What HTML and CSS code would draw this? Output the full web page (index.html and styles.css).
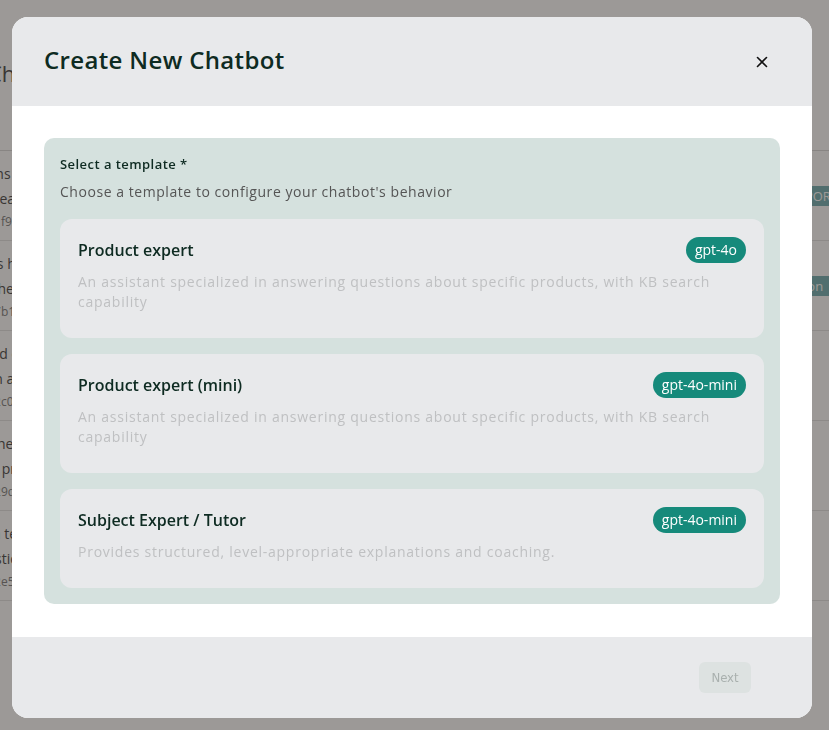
FILE: index.html
```html
<!DOCTYPE html>
<html>
	<head>
		<meta charset="UTF-8">
		<title>Create New Chatbot</title>
		<link rel="stylesheet" href="styles.css">
	</head>
	<body>
		<div class="page">
			<h1 class="pageTitle">Chatbots</h1>
			<table class="bots" cellpadding="0" cellspacing="0">
				<tr>
					<th class="colName">Name</th>
					<th>Template</th>
					<th class="colTag">Created At</th>
				</tr>
				<tr>
					<td><p>Maths tutor</p><p>for year seven</p><small>bot_1f9c2a</small></td>
					<td>Subject Expert / Tutor</td>
					<td><span class="tag">DATA_EXPORT</span></td>
				</tr>
				<tr>
					<td><p>Sales help</p><p>for the green line</p><small>bot_7b11de</small></td>
					<td>Product expert</td>
					<td><span class="tag">information</span></td>
				</tr>
				<tr>
					<td><p>Cloud docs</p><p>main assistant</p><small>bot_2c0e41</small></td>
					<td>Product expert (mini)</td>
					<td><span class="tag">SYSTEM</span></td>
				</tr>
				<tr>
					<td><p>Ex - helper</p><p>best practices</p><small>bot_29d0a7</small></td>
					<td>Product expert</td>
					<td><span class="tag">practise</span></td>
				</tr>
				<tr>
					<td><p>Data team</p><p>questions</p><small>bot_2e55f0</small></td>
					<td>Subject Expert / Tutor</td>
					<td><span class="tag">printing</span></td>
				</tr>
			</table>
		</div>

		<div class="overlay">
			<div class="modal">
				<div class="modalHead">
					<h2>Create New Chatbot</h2>
					<a href="#" class="close">
						<svg width="12" height="12" viewBox="0 0 12 12">
							<path d="M1.5 1.5 L10.5 10.5 M10.5 1.5 L1.5 10.5" stroke="#111" stroke-width="1.6" stroke-linecap="round"/>
						</svg>
					</a>
				</div>
				<div class="modalBody">
					<div class="picker">
						<p class="label">Select a template *</p>
						<p class="hint">Choose a template to configure your chatbot's behavior</p>
						<div class="cards">
							<div class="card">
								<div class="cardTop">
									<p class="cardName">Product expert</p>
									<span class="model">gpt-4o</span>
								</div>
								<p class="cardText">An assistant specialized in answering questions about specific products, with KB search capability</p>
							</div>
							<div class="card">
								<div class="cardTop">
									<p class="cardName">Product expert (mini)</p>
									<span class="model">gpt-4o-mini</span>
								</div>
								<p class="cardText">An assistant specialized in answering questions about specific products, with KB search capability</p>
							</div>
							<div class="card">
								<div class="cardTop">
									<p class="cardName">Subject Expert / Tutor</p>
									<span class="model">gpt-4o-mini</span>
								</div>
								<p class="cardText">Provides structured, level-appropriate explanations and coaching.</p>
							</div>
						</div>
					</div>
				</div>
				<div class="modalFoot">
					<button class="next" disabled>Next</button>
				</div>
			</div>
		</div>
	</body>
</html>
```

FILE: styles.css
```css
*{
	margin: 0;
	padding: 0;
	box-sizing: border-box;
}
body{
	width: 829px;
	height: 730px;
	overflow: hidden;
	background: #fff;
	font-family: "Open Sans", "Noto Sans", sans-serif;
}

/* page behind the dialog */
.page{
	width: 900px;
	margin: 0 0 0 -42px;
	padding: 58px 0 0 0;
	color: #555;
}
.pageTitle{
	font-size: 22px;
	font-weight: 400;
	margin-left: 30px;
	color: #555;
}
.bots{
	width: 100%;
	margin-top: 19px;
	font-size: 14px;
}
.bots th{
	text-align: left;
	font-weight: 600;
	font-size: 14px;
	height: 44px;
	padding: 0 12px;
	color: #666;
	border-bottom: 1px solid #ddd;
}
.bots .colName{
	width: 300px;
	color: transparent;
}
.bots .colTag{
	width: 104px;
	padding-left: 0;
}
.bots td{
	height: 90px;
	padding: 0 12px;
	border-bottom: 1px solid #e6e6e6;
	vertical-align: middle;
}
.bots td p{
	line-height: 25px;
}
.bots td small{
	font-size: 12px;
	color: #888;
}
.bots .tag{
	display: inline-block;
	padding: 1px 8px;
	background: #7fb6b8;
	color: #fff;
	font-size: 13px;
}

/* dialog */
.overlay{
	position: fixed;
	left: 0;
	top: 0;
	right: 0;
	bottom: 0;
	background: rgba(20, 12, 6, 0.42);
	display: flex;
	justify-content: center;
	align-items: flex-start;
	padding-top: 17px;
}
.modal{
	width: 800px;
	height: 701px;
	margin-left: -5px;
	border-radius: 16px;
	overflow: hidden;
	background: #fff;
	display: flex;
	flex-direction: column;
}
.modalHead{
	height: 89px;
	background: #e8e9eb;
	display: flex;
	align-items: center;
	justify-content: space-between;
	padding: 0 34px 0 32px;
}
.modalHead h2{
	font-size: 24px;
	font-weight: 600;
	line-height: 30px;
	margin-top: -3px;
	color: #0e2b22;
	letter-spacing: 0.35px;
}
.close{
	width: 32px;
	height: 32px;
	display: flex;
	align-items: center;
	justify-content: center;
}
.modalBody{
	flex: 1;
	padding: 32px;
}
.picker{
	background: #d5e1de;
	border-radius: 10px;
	padding: 16px;
}
.label{
	font-size: 13px;
	font-weight: 600;
	line-height: 20px;
	letter-spacing: 0.45px;
	color: #0e2b22;
}
.hint{
	font-size: 14px;
	line-height: 20px;
	margin-top: 8px;
	letter-spacing: 0.55px;
	color: #555;
}
.cards{
	margin-top: 17px;
	display: flex;
	flex-direction: column;
	gap: 16px;
}
.card{
	background: #e8e9eb;
	border-radius: 12px;
	padding: 18px 18px 26px 18px;
}
.cardTop{
	display: flex;
	align-items: center;
	justify-content: space-between;
	height: 26px;
}
.cardName{
	font-size: 16px;
	font-weight: 600;
	color: #0e2b22;
}
.model{
	height: 26px;
	line-height: 26px;
	padding: 0 9px;
	border-radius: 13px;
	background: #168a7b;
	color: #fff;
	font-size: 14px;
}
.cardText{
	margin-top: 9px;
	font-size: 14px;
	line-height: 20px;
	letter-spacing: 0.75px;
	color: #bfc0c2;
}
.modalFoot{
	height: 81px;
	background: #e8e9eb;
	display: flex;
	justify-content: flex-end;
	padding: 25px 61px 0 0;
}
.next{
	width: 52px;
	height: 31px;
	border: 0;
	border-radius: 6px;
	background: #dde2e1;
	color: #a9b0ae;
	font-family: "DejaVu Sans Condensed", "DejaVu Sans", sans-serif;
	font-size: 13px;
}
```
